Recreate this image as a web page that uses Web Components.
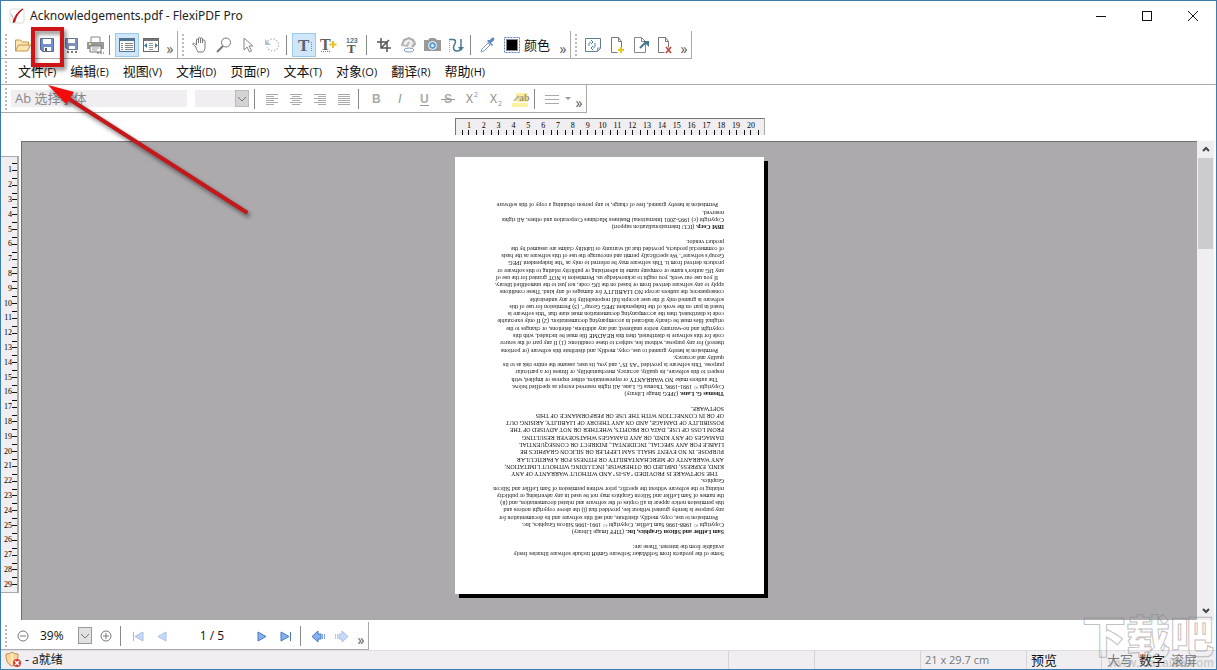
<!DOCTYPE html>
<html lang="zh-CN">
<head>
<meta charset="utf-8">
<title>Acknowledgements.pdf - FlexiPDF Pro</title>
<style>
	html, body {
		height: 100%;
		margin: 0;
	}

	body {
		font: 13px/18px "Open Sans", "Noto Sans CJK SC", sans-serif;
		color: #111;
		background: #fff;
		overflow: hidden;
	}
</style>
</head>
<body>
<app-window></app-window>

<script>
const icons = {
	logo: '<rect x="1" y="1" width="14" height="14" rx="2" fill="#fff" stroke="#ddd"/><path d="M1 4l3 4 1 6z" fill="#bbb"/><path d="M14 1C9 3 6 8 4 14c1 1 2 0 2-1C7 9 9 5 14 1z" fill="#c4161c" stroke="#c4161c"/>',
	open: '<path d="M.5 14V3h5l2 2h6v3" fill="#fbe3b4" stroke="#c99645"/><path d="M.5 14l3-6h12l-3 6z" fill="#fbe3b4" stroke="#c99645"/>',
	save: '<path d="M1.500 1.500h13v13h-11l-2-2z" fill="#6f8fd0" stroke="#596b94"/><path d="M4 2h8v5H4zM5 10h7v4H5z" fill="#fff"/><path d="M6 11h2v3H6z" fill="#555"/>',
	saveas: '<path d="M2.500 1.500h12v11h-10l-2-2z" fill="#7f93bd" stroke="#6b7894"/><path d="M5 2h7v4H5zM6 9h6v3H6z" fill="#fff"/><path d="M4 15h2M8 15h2M12 15h2" stroke="#777" stroke-width="2"/>',
	print: '<path d="M4 5V0h9v5" fill="#fff" stroke="#888"/><path d="M0 5h17v7H0z" fill="#989898"/><path d="M3 9h11v6H3z" fill="#fff" stroke="#777"/><path d="M5 11h7M5 13h5" stroke="#999"/><path d="M2 7h2" stroke="#f3df82" stroke-width="2"/><path d="M10 16h7" stroke="#555" stroke-dasharray="2 1"/>',
	fit: '<rect x=".5" y="1.500" width="15" height="13" fill="#f7fbfe" stroke="#52758f"/><path d="M0 3h16" stroke="#52758f" stroke-width="2"/><path d="M2 6.500h2M2 8.500h2M2 10.500h2M2 12.500h2M6 6.500h8M6 8.500h8M6 10.500h8M6 12.500h8" stroke="#888"/>',
	fitwide: '<rect x=".5" y="1.500" width="15" height="13" fill="#fff" stroke="#666"/><path d="M0 3h16" stroke="#777" stroke-width="2"/><path d="M6 6.500h4M6 8.500h4M6 10.500h4M6 12.500h4" stroke="#999"/><path d="M4 6v5L1 8.500zM12 6v5l3-2.500z" fill="#3d7ea6"/>',
	hand: '<path d="M4 10L1.500 8C0 7 1 5.500 2.500 6.500L4.500 8V3c0-1.500 2-1.500 2 0v3V1.500c0-1.500 2-1.500 2 0V6 2c0-1.500 2-1.500 2 0v4V4c0-1.500 2.500-1.500 2.500 0v6c0 3-1 4-2 5H6c-1-2-2-3-2-5z" fill="#fff" stroke="#777"/>',
	zoom: '<circle cx="10" cy="5.500" r="4.500" fill="#fff" stroke="#777"/><path d="M7 9l-6 6" stroke="#777" stroke-width="2"/>',
	cursor: '<path d="M4 1v12l3-3 2.500 5 2-1L9 9h4z" fill="#fff" stroke="#888"/>',
	rotate: '<path d="M4 4a6 6 0 1 1-1 6" fill="none" stroke="#aaa" stroke-width="1.500" stroke-dasharray="1 2"/><path d="M1 2v6h6z" fill="#a9c5d6"/>',
	text: '<text x="2" y="14" font-family="Liberation Serif" font-weight="bold" font-size="17" fill="#5a6570">T</text><path d="M15.500 5v10" stroke="#5a9bcd" stroke-dasharray="1 1"/>',
	textadd: '<text x="0" y="13" font-family="Liberation Serif" font-weight="bold" font-size="16" fill="#606060">T</text><path d="M1 14.500h10" stroke="#777" stroke-dasharray="1 1"/><path d="M13 4v7M9.500 7.500h7" stroke="#e8c51d" stroke-width="2"/>',
	textnum: '<text x="2" y="6" font-family="Liberation Sans" font-weight="bold" font-size="7" fill="#4c7890">123</text><text x="3" y="16" font-family="Liberation Serif" font-weight="bold" font-size="13" fill="#555">T</text>',
	crop: '<path d="M5 1v10h10M1 5h10v10M5 11l8-8" fill="none" stroke="#555" stroke-width="1.500"/>',
	shape: '<path d="M2 8L4 3l5-2 4 2 2 4-3 3" fill="#eee" stroke="#aaa" stroke-width="2"/><path d="M1 8l6 1 2-4M13 8l2-4" fill="none" stroke="#bbb" stroke-width="2"/><ellipse cx="9" cy="13" rx="5" ry="2" fill="#fff" stroke="#779fbd"/>',
	camera: '<path d="M0 3h4l2-2h5l2 2h4v11H0z" fill="#999"/><circle cx="8.500" cy="8.500" r="4" fill="#5b9fd2" stroke="#fff"/><circle cx="8.500" cy="8.500" r="1.500" fill="#dff0fb"/>',
	path: '<path d="M1 2.500h4c2 0 2.500 1 2.500 2.500S5.500 8 5.500 10.500 7 14 9 14s4-1 4-4V2" fill="none" stroke="#477795" stroke-width="1.500"/><path d="M10 10h6l-3 4z" fill="#477795"/><path d="M1.500 4v11" stroke="#8aa9bd" stroke-dasharray="1 1"/>',
	picker: '<path d="M1 15l1-3 6-6 2 2-6 6z" fill="#fff" stroke="#799ccc"/><path d="M7 4l5 5 1-1-2-2c3-2 4-4 3-5s-3 0-4 2L8 3z" fill="#6689c3"/>',
	swatch: '<rect x=".5" y=".5" width="15" height="15" fill="#fff" stroke="#597ccd" stroke-dasharray="2 1"/><path d="M2 2h12v12H2z" fill="#888"/><path d="M3 3h10v10H3z"/>',
	refresh: '<path d="M.5 1.500h15v10l-3 3H.5z" fill="#fff" stroke="#5a7d94"/><path d="M12.500 14v-3h3" fill="#ddd" stroke="#999"/><path d="M4 9V7c0-1 1-2 2-2M6 3l2 2-2 2M10 6v3c0 1-1 2-2 2M8 9l-2 2 2 2" fill="none" stroke="#3f83a8"/>',
	pageadd: '<path d="M2.500.5h7l3 4v6M2.500.5v15h6M9.500.5v4h3" fill="none" stroke="#777"/><path d="M12 10v6M9 13h6" stroke="#e8c51d" stroke-width="2"/>',
	pageout: '<path d="M1.500.5h7l4 4v11h-11zM8.500.5v4h4" fill="none" stroke="#888"/><path d="M7 11l6-6" stroke="#47788f" stroke-width="2"/><path d="M10 4h6v6z" fill="#47788f"/>',
	pagedel: '<path d="M1.500.5h7l3 4v6M1.500.5v15h6M8.500.5v4h3" fill="none" stroke="#777"/><path d="M9 10l5 6M14 10l-5 6" stroke="#c83a34" stroke-width="1.500"/>',
	left: '<path d="M2 3.500h12M2 5.500h8M2 7.500h12M2 9.500h8M2 11.500h12M2 13.500h8" stroke="#aaa"/>',
	center: '<path d="M2 3.500h12M4 5.500h8M2 7.500h12M4 9.500h8M2 11.500h12M4 13.500h8" stroke="#aaa"/>',
	right: '<path d="M2 3.500h12M6 5.500h8M2 7.500h12M6 9.500h8M2 11.500h12M6 13.500h8" stroke="#aaa"/>',
	justify: '<path d="M2 3.500h12M2 5.500h12M2 7.500h12M2 9.500h12M2 11.500h12M2 13.500h12" stroke="#aaa"/>',
	bold: '<text x="4" y="12" font-family="Liberation Sans" font-weight="bold" font-size="12" fill="#aaa">B</text>',
	italic: '<text x="6" y="12" font-family="Liberation Sans" font-style="italic" font-size="13" fill="#999">I</text>',
	under: '<text x="4" y="12" font-family="Liberation Sans" font-weight="bold" font-size="12" fill="#aaa">U</text><path d="M4 14.500h9" stroke="#999"/>',
	strike: '<text x="4" y="12" font-family="Liberation Sans" font-weight="bold" font-size="12" fill="#aaa">S</text><path d="M1 8.500h14" stroke="#999"/>',
	sup: '<text x="2" y="12" font-family="Open Sans" font-size="12" fill="#888">X</text><text x="10" y="6" font-family="Open Sans" font-size="7" fill="#7897ad">2</text>',
	sub: '<text x="2" y="12" font-family="Open Sans" font-size="12" fill="#888">X</text><text x="10" y="15" font-family="Open Sans" font-size="7" fill="#7897ad">2</text>',
	mark: '<path d="M4 2h12v9H4zM0 12h16v4H0z" fill="#fbf1a0"/><path d="M1 10l5-6 2 2-5 4z" fill="#bdb9a0"/><text x="7" y="10" font-family="Liberation Serif" font-weight="bold" font-size="10" fill="#9b957b">ab</text>',
	lines: '<path d="M1 4.500h14M1 8.500h14M1 12.500h14" stroke="#aaa"/>',
	caret: '<path d="M5 6h6l-3 3z" fill="#999"/>',
	minus: '<circle cx="8" cy="8" r="5" fill="#fff" stroke="#777"/><path d="M5 8h6" stroke="#777"/>',
	plus: '<circle cx="8" cy="8" r="5" fill="#fff" stroke="#777"/><path d="M5 8h6M8 5v6" stroke="#777"/>',
	first: '<path d="M3.500 4v9" stroke="#9fb6df"/><path d="M13 4v9L5 8.500z" fill="#c6d9f8" stroke="#a8c0e8"/>',
	prev: '<path d="M12 4v9L4 8.500z" fill="#c6d9f8" stroke="#a8c0e8"/>',
	next: '<path d="M4 4v9l8-4.500z" fill="#87b0f0" stroke="#4a79c4"/>',
	last: '<path d="M3 4v9l8-4.500z" fill="#87b0f0" stroke="#4a79c4"/><path d="M12.500 4v9" stroke="#4a79c4"/>',
	back: '<path d="M2 8.500L8 3v3h3v5H8v3z" fill="#87b0f0" stroke="#4a79c4"/><path d="M12.500 6v5M14.500 6v5" stroke="#7aa2dc"/>',
	forward: '<path d="M14 8.500L8 3v3H5v5h3v3z" fill="#c6d9f8" stroke="#a8c0e8"/><path d="M3.500 6v5M1.500 6v5" stroke="#b7cdee"/>',
	shield: '<path d="M1 3c3 0 5-1 6-2 1 1 3 2 6 2 0 6-1 10-6 12C2 13 1 9 1 3z" fill="#f9d79b" stroke="#bd8f50"/><path d="M7 2v12" stroke="#fff3d6"/><circle cx="12" cy="12" r="4" fill="#d23b36"/><path d="M10 10l4 4M14 10l-4 4" stroke="#fff" stroke-width="1.500"/>',
	min: '<path d="M3 8.500h10" stroke="#111"/>',
	max: '<rect x="3.500" y="3.500" width="9" height="9" fill="none" stroke="#111"/>',
	close: '<path d="M3 3l10 10M13 3L3 13" stroke="#111"/>',
	up: '<path d="M5 10l3-3 3 3" fill="none" stroke="#444" stroke-width="2"/>',
	down: '<path d="M5 6l3 3 3-3" fill="none" stroke="#444" stroke-width="2"/>'
};

function svg(name) {
	return `<svg width="16" height="16" viewBox="0 0 16 16" overflow="visible" aria-hidden="true">${icons[name]}</svg>`;
}

function define(name, render) {
	customElements.define(name, class extends HTMLElement {
		constructor() {
			super();
			this.attachShadow({ mode: 'open' });
		}

		connectedCallback() {
			const t = document.createElement('template');
			t.innerHTML = render(this);
			this.shadowRoot.replaceChildren(t.content.cloneNode(true));
		}
	});
}

//	icon: name of the icon, label: accessible name, pressed: highlighted state
define('tool-button', e => `
	<style>
		:host { display: flex; flex: 0 0 24px; }
		button {
			box-sizing: border-box;
			width: 100%;
			height: 24px;
			padding: 0;
			border: 1px solid transparent;
			background: none;
			display: flex;
			align-items: center;
			justify-content: center;
		}
		svg { flex: none; }
		:host([pressed]) button { background: #cfe6f9; border-color: #9ccbee; }
	</style>
	<button type="button" aria-label="${e.getAttribute('label')}">${svg(e.getAttribute('icon'))}</button>
`);

define('tool-more', () => `
	<style>
		:host { display: flex; flex: 0 0 14px; align-self: flex-end; justify-content: center; }
		button { padding: 0; border: 0; background: none; font: 14px/18px "Open Sans", sans-serif; color: #555; }
	</style>
	<button type="button" aria-label="更多">»</button>
`);

define('tool-separator', () => `
	<style>
		:host { flex: 0 0 1px; height: 20px; margin: 0 5px 0 2px; background: #888; }
	</style>
`);

define('tool-bar', () => `
	<style>
		:host {
			display: flex;
			align-items: center;
			box-sizing: border-box;
			height: 28px;
			border-right: 1px solid #aaa;
			border-bottom: 1px solid #aaa;
		}
		:host([plain]) { border-right: 0; }
		.grip {
			flex: 0 0 2px;
			height: 22px;
			margin: 0 4px;
			background: repeating-linear-gradient(#bbb 0 2px, transparent 2px 4px);
		}
	</style>
	<div class="grip"></div>
	<slot></slot>
`);

//	editable field with a drop button
define('combo-field', e => `
	<style>
		:host { display: flex; min-width: 0; height: 17px; align-items: stretch; }
		input {
			flex: 1;
			width: 0;
			min-width: 0;
			box-sizing: border-box;
			padding: 0 4px;
			border: 0;
			background: #f0eef1;
			font: 13px/17px "Open Sans", "Noto Sans CJK SC", sans-serif;
			color: #888;
		}
		:host([active]) input { background: #fff; color: #111; font-size: 12px; padding: 0; }
		button {
			flex: 0 0 14px;
			box-sizing: border-box;
			padding: 0;
			border: 1px solid #bbb;
			background: #d5d3d6;
			display: flex;
			align-items: center;
			justify-content: center;
		}
		:host([active]) button { border-color: #999; background: #e2e0e3; }
		svg { width: 12px; height: 12px; flex: none; }
		:host([bare]) button { display: none; }
	</style>
	<input type="text" aria-label="${e.getAttribute('label')}" value="${e.getAttribute('value') || ''}">
	<button type="button" aria-label="展开"><svg viewBox="0 0 12 12"><path d="M2 4l4 4 4-4" fill="none" stroke="#777"/></svg></button>
`);

define('title-bar', () => `
	<style>
		:host { display: flex; align-items: center; height: 30px; padding: 0 11px 0 8px; gap: 5px; }
		h1 { flex: 1; margin: 0; font: 12px/18px "Noto Sans", sans-serif; color: #222; }
		nav { display: flex; gap: 22px; }
	</style>
	${svg('logo')}
	<h1><slot></slot></h1>
	<nav>
		<tool-button icon="min" label="最小化"></tool-button>
		<tool-button icon="max" label="最大化"></tool-button>
		<tool-button icon="close" label="关闭"></tool-button>
	</nav>
`);

const menus = ['文件(F)', '编辑(E)', '视图(V)', '文档(D)', '页面(P)', '文本(T)', '对象(O)', '翻译(R)', '帮助(H)'];

define('menu-bar', () => `
	<style>
		:host { display: flex; gap: 14px; padding-left: 7px; }
		button { padding: 0; border: 0; background: none; font: 13px/18px "Noto Sans CJK SC", sans-serif; color: #111; }
		small { font: 11px/18px "Open Sans", sans-serif; }
	</style>
	${menus.map(m => `<button type="button">${m.slice(0, 2)}<small>${m.slice(2)}</small></button>`).join('')}
`);

//	each cell is one centimetre, from half mark to half mark
define('page-ruler', e => `
	<style>
		:host { display: flex; box-sizing: border-box; background: #f0eef1; font: 8px/8px "Liberation Serif", serif; color: #000; }
		.cell { flex: 1; min-width: 0; min-height: 0; display: flex; align-items: center; justify-content: flex-end; }
		i { background: #111; }
		:host([axis="x"]) { width: 310px; height: 17px; padding: 0 4px 0 6px; border: solid #777; border-width: 1px 1px 0; border-right-color: #aaa; }
		:host([axis="x"]) .cell { flex-direction: column; background: linear-gradient(#111, #111) left bottom / 1px 5px no-repeat; }
		:host([axis="x"]) .cell:last-child { border-right: 1px solid transparent; background: linear-gradient(#111, #111) left bottom / 1px 5px no-repeat, linear-gradient(#111, #111) right bottom / 1px 5px no-repeat border-box; }
		:host([axis="x"]) i { width: 1px; height: 5px; }
		:host([axis="y"]) { flex-direction: column; width: 18px; height: 437px; padding: 6px 0 0; border: solid #aaa; border-width: 1px 2px 1px 0; }
		:host([axis="y"]) .cell { background: linear-gradient(#111, #111) right top / 5px 1px no-repeat; }
		:host([axis="y"]) i { width: 5px; height: 1px; }
	</style>
	${Array.from({ length: +e.getAttribute('count') }, (_, i) => `<div class="cell"><span>${i + 1}</span><i></i></div>`).join('')}
`);

const lines = [
	'Some of the products from SoftMaker Software GmbH include software libraries freely',
	'available from the internet. These are:',
	'',
	'<b>Sam Leffler and Silicon Graphics, Inc.</b> (TIFF Image Library)',
	'Copyright © 1988-1996 Sam Leffler. Copyright © 1991-1996 Silicon Graphics, Inc.',
	'&emsp;Permission to use, copy, modify, distribute, and sell this software and its documentation for',
	'any purpose is hereby granted without fee, provided that (i) the above copyright notices and',
	'this permission notice appear in all copies of the software and related documentation, and (ii)',
	'the names of Sam Leffler and Silicon Graphics may not be used in any advertising or publicity',
	'relating to the software without the specific, prior written permission of Sam Leffler and Silicon',
	'Graphics.',
	'&emsp;THE SOFTWARE IS PROVIDED "AS-IS" AND WITHOUT WARRANTY OF ANY',
	'KIND, EXPRESS, IMPLIED OR OTHERWISE, INCLUDING WITHOUT LIMITATION,',
	'ANY WARRANTY OF MERCHANTABILITY OR FITNESS FOR A PARTICULAR',
	'PURPOSE. IN NO EVENT SHALL SAM LEFFLER OR SILICON GRAPHICS BE',
	'LIABLE FOR ANY SPECIAL, INCIDENTAL, INDIRECT OR CONSEQUENTIAL',
	'DAMAGES OF ANY KIND, OR ANY DAMAGES WHATSOEVER RESULTING',
	'FROM LOSS OF USE, DATA OR PROFITS, WHETHER OR NOT ADVISED OF THE',
	'POSSIBILITY OF DAMAGE, AND ON ANY THEORY OF LIABILITY, ARISING OUT',
	'OF OR IN CONNECTION WITH THE USE OR PERFORMANCE OF THIS',
	'SOFTWARE.',
	'',
	'<b>Thomas G. Lane.</b> (JPEG Image Library)',
	'Copyright © 1991-1996, Thomas G. Lane. All rights reserved except as specified below.',
	'&emsp;The authors make NO WARRANTY or representation, either express or implied, with',
	'respect to this software, its quality, accuracy, merchantability, or fitness for a particular',
	'purpose. This software is provided "AS IS", and you, its user, assume the entire risk as to its',
	'quality and accuracy.',
	'&emsp;Permission is hereby granted to use, copy, modify, and distribute this software (or portions',
	'thereof) for any purpose, without fee, subject to these conditions: (1) If any part of the source',
	'code for this software is distributed, then this README file must be included, with this',
	'copyright and no-warranty notice unaltered; and any additions, deletions, or changes to the',
	'original files must be clearly indicated in accompanying documentation. (2) If only executable',
	'code is distributed, then the accompanying documentation must state that "this software is',
	'based in part on the work of the Independent JPEG Group". (3) Permission for use of this',
	'software is granted only if the user accepts full responsibility for any undesirable',
	'consequences; the authors accept NO LIABILITY for damages of any kind. These conditions',
	'apply to any software derived from or based on the IJG code, not just to the unmodified library.',
	'&emsp;If you use our work, you ought to acknowledge us. Permission is NOT granted for the use of',
	'any IJG author\'s name or company name in advertising or publicity relating to this software or',
	'products derived from it.  This software may be referred to only as "the Independent JPEG',
	'Group\'s software". We specifically permit and encourage the use of this software as the basis',
	'of commercial products, provided that all warranty or liability claims are assumed by the',
	'product vendor.',
	'',
	'<b>IBM Corp.</b> (ICU Internationalization support)',
	'Copyright (c) 1995-2001 International Business Machines Corporation and others. All rights',
	'reserved.',
	'&emsp;Permission is hereby granted, free of charge, to any person obtaining a copy of this software'
];

//	a sheet of the document, turned upside down
define('document-page', () => `
	<style>
		:host {
			display: flex;
			flex-direction: column;
			justify-content: space-between;
			box-sizing: border-box;
			width: 309px;
			height: 437px;
			padding: 37px 30px 44px 40px;
			background: #fff;
			box-shadow: -4px -4px 0 #000;
			transform: rotate(180deg);
			font: 6px/7px "Liberation Serif", serif;
			color: #111;
			white-space: nowrap;
		}
		p { margin: 0; height: 7px; }
	</style>
	${lines.map(l => `<p>${l}</p>`).join('')}
`);

define('scroll-bar', () => `
	<style>
		:host { display: flex; flex-direction: column; align-items: center; width: 17px; margin-right: 2px; background: #f0eef1; }
		button { padding: 0; border: 0; background: none; width: 16px; height: 17px; }
		.thumb { width: 15px; height: 19%; background: #cdcbce; }
		.track { flex: 1; width: 15px; }
	</style>
	<button type="button" aria-label="向上">${svg('up')}</button>
	<div class="thumb"></div>
	<div class="track"></div>
	<button type="button" aria-label="向下">${svg('down')}</button>
`);

define('page-view', () => `
	<style>
		:host { display: flex; flex-direction: column; min-height: 0; }
		.top { display: flex; justify-content: center; padding: 5px 19px 6px 21px; }
		.main { flex: 1; display: flex; min-height: 0; }
		.side { flex: 0 0 20px; padding-top: 15px; }
		.canvas {
			flex: 1;
			display: flex;
			justify-content: center;
			align-items: flex-start;
			padding-top: 15px;
			overflow: hidden;
			background: #acaaad;
			border-top: 1px solid #707070;
			border-left: 1px solid #707070;
		}
	</style>
	<div class="top"><page-ruler axis="x" count="20"></page-ruler></div>
	<div class="main">
		<div class="side"><page-ruler axis="y" count="29"></page-ruler></div>
		<div class="canvas"><document-page></document-page></div>
		<scroll-bar></scroll-bar>
	</div>
`);

define('status-bar', () => `
	<style>
		:host {
			display: flex;
			align-items: stretch;
			height: 18px;
			padding-left: 4px;
			background: #f0eef1;
			border-top: 1px solid #dedce0;
			line-height: 18px;
		}
		div { box-sizing: border-box; padding-left: 4px; border-left: 1px solid #d5d3d6; white-space: nowrap; }
		.ready { flex: 1; display: flex; gap: 4px; border: 0; padding: 0; font-size: 12px; }
		.blank { flex: 0 0 86px; }
		.blank + .blank, .size { flex: 0 0 106px; }
		.size { font-size: 11px; color: #777; }
		.view { flex: 0 0 75px; }
		.keys { flex: 0 0 115px; display: flex; gap: 6px; padding-left: 5px; }
		.off { color: #777; }
	</style>
	<div class="ready">${svg('shield')}<span>- a就绪</span></div>
	<div class="blank"></div>
	<div class="blank"></div>
	<div class="size">21 x 29.7 cm</div>
	<div class="view">预览</div>
	<div class="keys"><span class="off">大写</span><span>数字</span><span class="off">滚屏</span></div>
`);

//	red frame round a button and the arrow that points at it
define('call-out', () => `
	<style>
		:host { position: absolute; top: -1px; left: -1px; z-index: 9; pointer-events: none; }
		svg { display: block; filter: drop-shadow(2px 3px 2px rgba(0, 0, 0, .5)); }
	</style>
	<svg width="260" height="230" aria-hidden="true">
		<rect x="33" y="29" width="29" height="36" fill="none" stroke="#cf1418" stroke-width="4"/>
		<path d="M66 97L246 212" stroke="#c4181b" stroke-width="4" stroke-linecap="round"/>
		<path d="M48 85l26 7-8 12z" fill="#f20d0d"/>
	</svg>
`);

define('water-mark', () => `
	<style>
		:host {
			position: absolute;
			right: 2px;
			bottom: 0;
			z-index: 8;
			pointer-events: none;
			text-align: right;
			color: transparent;
		}
		div { font: 900 44px/46px "Noto Sans CJK SC", sans-serif; -webkit-text-stroke: 1px rgba(130, 130, 130, .5); }
		span { display: block; font: bold 12px/12px "Liberation Sans", sans-serif; color: rgba(150, 150, 150, .4); }
	</style>
	<div>下载吧</div>
	<span>www.xiazaiba.com</span>
`);

define('app-window', () => `
	<style>
		:host {
			position: relative;
			display: flex;
			flex-direction: column;
			box-sizing: border-box;
			height: 100vh;
			border: 1px solid #3b7cae;
			overflow: hidden;
			background: #fff;
		}
		.row { display: flex; flex: none; }
		page-view { flex: 1; }
		label { flex: 0 0 32px; }
		output { flex: 0 0 76px; text-align: center; font-size: 12px; }
		.font { flex: 0 0 176px; }
		.size { flex: 0 0 54px; margin: 0 3px 0 8px; }
		.zoom { flex: 0 0 52px; margin: 0 2px 0 5px; }
		.caret { flex: 0 0 8px; min-width: 0; }
		.bottom { margin-top: 2px; }
		.menu { flex: 1; height: 26px; }
	</style>
	<title-bar>Acknowledgements.pdf - FlexiPDF Pro</title-bar>
	<div class="row">
		<tool-bar>
			<tool-button icon="open" label="打开"></tool-button>
			<tool-button icon="save" label="保存"></tool-button>
			<tool-button icon="saveas" label="另存为"></tool-button>
			<tool-button icon="print" label="打印"></tool-button>
			<tool-separator></tool-separator>
			<tool-button icon="fit" label="整页" pressed></tool-button>
			<tool-button icon="fitwide" label="页宽"></tool-button>
			<tool-more></tool-more>
		</tool-bar>
		<tool-bar>
			<tool-button icon="hand" label="手形"></tool-button>
			<tool-button icon="zoom" label="缩放"></tool-button>
			<tool-button icon="cursor" label="选择"></tool-button>
			<tool-button icon="rotate" label="旋转"></tool-button>
			<tool-separator></tool-separator>
			<tool-button icon="text" label="编辑文本" pressed></tool-button>
			<tool-button icon="textadd" label="添加文本"></tool-button>
			<tool-button icon="textnum" label="编号"></tool-button>
			<tool-separator></tool-separator>
			<tool-button icon="crop" label="裁剪"></tool-button>
			<tool-button icon="shape" label="形状"></tool-button>
			<tool-button icon="camera" label="快照"></tool-button>
			<tool-button icon="path" label="链接"></tool-button>
			<tool-separator></tool-separator>
			<tool-button icon="picker" label="取色"></tool-button>
			<tool-button icon="swatch" label="颜色"></tool-button>
			<label>颜色</label>
			<tool-more></tool-more>
		</tool-bar>
		<tool-bar>
			<tool-button icon="refresh" label="刷新"></tool-button>
			<tool-button icon="pageadd" label="插入页面"></tool-button>
			<tool-button icon="pageout" label="提取页面"></tool-button>
			<tool-button icon="pagedel" label="删除页面"></tool-button>
			<tool-more></tool-more>
		</tool-bar>
	</div>
	<div class="row">
		<tool-bar class="menu" plain><menu-bar></menu-bar></tool-bar>
	</div>
	<div class="row">
		<tool-bar>
			<combo-field class="font" label="字体" value="Ab 选择字体" bare></combo-field>
			<combo-field class="size" label="字号"></combo-field>
			<tool-separator></tool-separator>
			<tool-button icon="left" label="左对齐"></tool-button>
			<tool-button icon="center" label="居中"></tool-button>
			<tool-button icon="right" label="右对齐"></tool-button>
			<tool-button icon="justify" label="两端对齐"></tool-button>
			<tool-separator></tool-separator>
			<tool-button icon="bold" label="粗体"></tool-button>
			<tool-button icon="italic" label="斜体"></tool-button>
			<tool-button icon="under" label="下划线"></tool-button>
			<tool-button icon="strike" label="删除线"></tool-button>
			<tool-button icon="sup" label="上标"></tool-button>
			<tool-button icon="sub" label="下标"></tool-button>
			<tool-button icon="mark" label="突出显示"></tool-button>
			<tool-separator></tool-separator>
			<tool-button icon="lines" label="行距"></tool-button>
			<tool-button class="caret" icon="caret" label="行距选项"></tool-button>
			<tool-more></tool-more>
		</tool-bar>
	</div>
	<page-view></page-view>
	<div class="row bottom">
		<tool-bar>
			<tool-button icon="minus" label="缩小"></tool-button>
			<combo-field class="zoom" label="缩放比例" value="39%" active></combo-field>
			<tool-button icon="plus" label="放大"></tool-button>
			<tool-separator></tool-separator>
			<tool-button icon="first" label="首页"></tool-button>
			<tool-button icon="prev" label="上一页"></tool-button>
			<output>1 / 5</output>
			<tool-button icon="next" label="下一页"></tool-button>
			<tool-button icon="last" label="末页"></tool-button>
			<tool-separator></tool-separator>
			<tool-button icon="back" label="后退"></tool-button>
			<tool-button icon="forward" label="前进"></tool-button>
			<tool-more></tool-more>
		</tool-bar>
	</div>
	<status-bar></status-bar>
	<water-mark></water-mark>
	<call-out></call-out>
`);
</script>
</body>
</html>
